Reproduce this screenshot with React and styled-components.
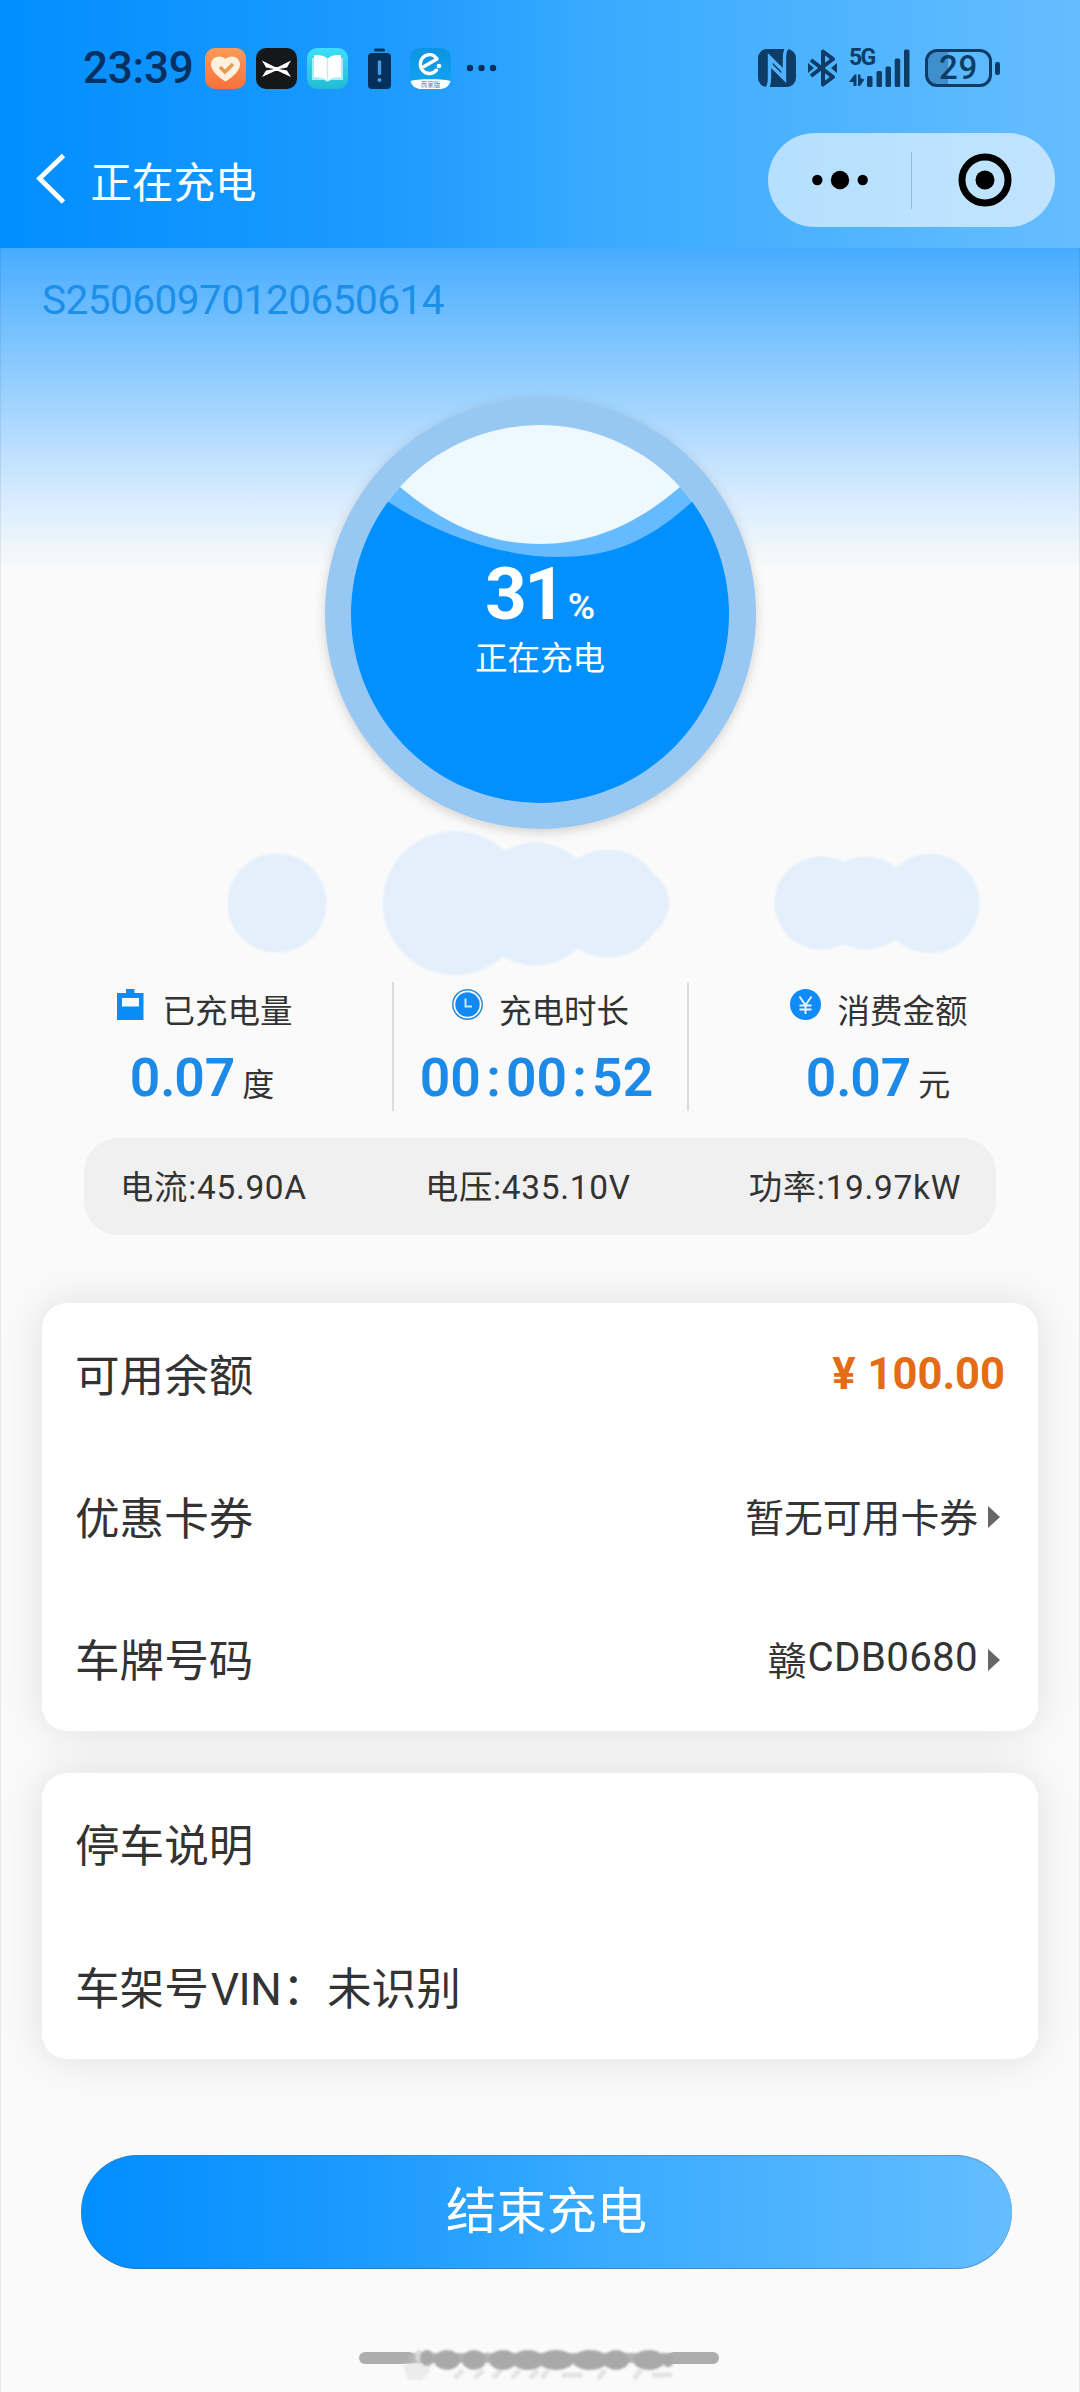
import React from "react";
import styled, { createGlobalStyle } from "styled-components";

const GlobalStyle = createGlobalStyle`
  *, *::before, *::after { box-sizing: border-box; }
  html, body { margin: 0; padding: 0; background: #fafafa; }
  body {
    font-family: Roboto, "Noto Sans CJK SC", sans-serif;
    color: #333;
    -webkit-font-smoothing: antialiased;
  }
`;

const Screen = styled.div`
  width: 1080px;
  height: 2392px;
  display: flex;
  flex-direction: column;
  overflow: hidden;
  background: #fafafa;
`;

/* ---------- header ---------- */

const Header = styled.header`
  flex: none;
  height: 248px;
  background: linear-gradient(90deg, #028eff 0%, #1c9aff 35%, #38aaff 55%, #66bdff 100%);
`;

const StatusBar = styled.div`
  height: 112px;
  padding: 24px 80px 0 83px;
  display: flex;
  align-items: center;
  justify-content: space-between;
  color: #06305c;
`;

const StatusGroup = styled.div`
  display: flex;
  align-items: center;
`;

const Clock = styled.span`
  width: 122px;
  font-size: 44px;
  font-weight: 500;
  line-height: 44px;
  letter-spacing: -0.2px;
  color: #06305f;
`;

const AppIcons = styled.div`
  display: flex;
  align-items: center;
  gap: 10px;
`;

const BatteryAlert = styled.svg`
  margin: 0 9px 0 10px;
`;

const MoreDots = styled.svg`
  margin-left: 5px;
`;

const SignalIcons = styled.div`
  display: flex;
  align-items: center;
  color: #0d3d66;
`;

const Gap = styled.span`
  width: ${(p) => p.$w}px;
`;

const Signal = styled.div`
  width: 61px;
  height: 38px;
  display: flex;
  position: relative;
`;

const NetworkType = styled.span`
  position: absolute;
  left: 0;
  top: -1px;
  font-size: 23px;
  line-height: 20px;
  font-weight: 700;
  letter-spacing: -1.6px;
`;

const BatteryBody = styled.div`
  width: 67px;
  height: 38px;
  display: flex;
  align-items: center;
  justify-content: center;
  border: 3.5px solid #0d3d66;
  border-radius: 12px;
  background: linear-gradient(90deg, #3f8fcc 0 32%, transparent 32%);
  font-size: 33px;
  font-weight: 500;
  line-height: 32px;
  letter-spacing: 0.8px;
`;

const BatteryNub = styled.span`
  width: 5px;
  height: 13px;
  margin-left: 3px;
  border-radius: 2px;
  background: #0d3d66;
`;

const NavBar = styled.div`
  height: 136px;
  padding: 0 25px 0 36px;
  display: flex;
  align-items: center;
`;

const Title = styled.h1`
  margin: 7px auto 0 23.5px;
  font-size: 41.5px;
  line-height: 48px;
  font-weight: 400;
  color: #fff;
`;

const Capsule = styled.div`
  width: 287px;
  height: 94px;
  display: flex;
  align-items: center;
  border-radius: 47px;
  background: rgba(255, 255, 255, 0.6);
`;

const CapsuleButton = styled.span`
  flex: 1;
  display: flex;
  justify-content: center;
`;

const CapsuleRule = styled.span`
  width: 1px;
  height: 57px;
  background: #94bbdb;
`;

/* ---------- body ---------- */

const Body = styled.main`
  flex: 1;
  padding-top: 32px;
  display: flex;
  flex-direction: column;
  background: linear-gradient(180deg, #47acff 0, #8dcbff 122px, #d6ebfe 248px, #fafafa 322px);
  box-shadow: inset 1px 0 rgba(0, 0, 0, 0.07), inset -1px 0 rgba(0, 0, 0, 0.07);
`;

const Serial = styled.div`
  padding-left: 42px;
  font-size: 40.5px;
  line-height: 40px;
  letter-spacing: -0.5px;
  color: #1c8fe9;
`;

const Gauge = styled.div`
  position: relative;
  flex: none;
  width: 431px;
  height: 431px;
  margin: 78px auto 0;
  padding: 26.5px;
  border-radius: 50%;
  background: #97c8f3;
  box-shadow: 0 3px 11px rgba(90, 80, 70, 0.24);
`;

const GaugeReadout = styled.div`
  position: absolute;
  inset: 0;
  padding-top: 160px;
  display: flex;
  flex-direction: column;
  align-items: center;
  color: #fff;
`;

const Percent = styled.div`
  height: 72px;
  display: flex;
  align-items: baseline;
  font-size: 73px;
  font-weight: 700;
  line-height: 72px;
  letter-spacing: -2.5px;
`;

const PercentSign = styled.span`
  margin-left: 4px;
  font-size: 37px;
  font-weight: 600;
  letter-spacing: 0;
`;

const GaugeLabel = styled.div`
  margin-top: 9px;
  font-size: 32.5px;
  line-height: 40px;
`;

const Blobs = styled.svg`
  display: block;
  flex: none;
  margin-bottom: 3px;
`;

const Stats = styled.section`
  flex: none;
  height: 129px;
  padding: 0 11px 0 16px;
  display: grid;
  grid-template-columns: 376px 297px 1fr;
`;

const Stat = styled.div`
  padding-top: 10px;
  display: flex;
  flex-direction: column;
  align-items: center;
  border-left: ${(p) => (p.$ruled ? "2px solid #dcdcdc" : "none")};
  border-right: ${(p) => (p.$ruled ? "2px solid #dcdcdc" : "none")};
`;

const StatLabel = styled.div`
  display: flex;
  align-items: center;
  gap: 16px;
  font-size: 32.5px;
  line-height: 40px;
`;

const StatIcon = styled.svg`
  margin-top: -16px;
`;

const StatValue = styled.div`
  height: 60px;
  margin: 15.5px ${(p) => p.$inset || 0}px 0 0;
  display: flex;
  align-items: baseline;
  font-size: 53.5px;
  font-weight: 600;
  line-height: 60px;
  color: #1d8ae8;
`;

const Sep = styled.span`
  width: ${(p) => p.$w}px;
  text-align: center;
`;

const Unit = styled.span`
  margin-left: 7px;
  font-size: 32px;
  font-weight: 400;
  color: #333;
`;

const Readings = styled.section`
  flex: none;
  height: 97px;
  margin: 27px 84px 0;
  padding: 0 35px 4px 36px;
  display: flex;
  align-items: center;
  justify-content: space-between;
  border-radius: 34px;
  background: #f0f0f0;
  font-size: 33.4px;
  letter-spacing: 0.7px;
`;

const Card = styled.section`
  flex: none;
  margin: ${(p) => p.$top}px 42px 0;
  padding: 0 33px 0 33px;
  border-radius: 25px;
  background: #fff;
  box-shadow: 0 0 44px rgba(0, 0, 0, 0.115);
`;

const Row = styled.div`
  height: 142.8px;
  padding-bottom: 4px;
  display: flex;
  align-items: center;
  justify-content: space-between;
  font-size: 44.6px;
  font-weight: 400;
`;

const Vin = styled.span`
  margin: 0 1px 0 2px;
  letter-spacing: -0.6px;
`;

const Amount = styled.span`
  margin-top: 4px;
  display: flex;
  gap: 10px;
  font-size: 43.5px;
  font-weight: 700;
  color: #e46c17;
`;

const Yen = styled.span`
  margin-right: 2px;
`;

const Choice = styled.span`
  display: flex;
  align-items: center;
  margin-right: 5px;
  font-size: 38.8px;
`;

const Plate = styled.span`
  margin-left: 1px;
  font-size: 40.3px;
  letter-spacing: 0.3px;
`;

const Caret = styled.span`
  margin: 4px 0 0 10px;
  border-left: 12px solid #666;
  border-top: 11px solid transparent;
  border-bottom: 11px solid transparent;
`;

const StopButton = styled.button`
  flex: none;
  height: 114px;
  margin: 96px 68px 0 81px;
  padding: 0;
  border: 0;
  border-radius: 57px;
  background: linear-gradient(90deg, #028eff 0%, #1c9aff 30%, #38aaff 55%, #64bdff 100%);
  box-shadow: inset 0 1px rgba(80, 110, 140, 0.45), inset 0 -1px rgba(50, 90, 130, 0.45);
  font-family: inherit;
  font-size: 50.3px;
  line-height: 60px;
  color: #fff;
`;

const HomeBar = styled.svg`
  display: block;
  flex: none;
  margin-top: 77px;
`;

function HeartApp() {
  return (
    <svg width="41" height="41" viewBox="0 0 41 41">
      <defs>
        <linearGradient id="orange" x1="0" y1="0" x2="0" y2="1">
          <stop offset="0" stopColor="#fb9a56" />
          <stop offset="1" stopColor="#f9703c" />
        </linearGradient>
      </defs>
      <rect width="41" height="41" rx="10" fill="url(#orange)" />
      <path d="M20.5 33.5 C17 31.5 6 24 6 16.5 C6 8.5 16 6 20.5 11 C25 6 35 8.5 35 16.5 C35 24 24 31.5 20.5 33.5Z" fill="#fff1e0" />
      <path d="M15 19 l5 5 l8 -8" fill="none" stroke="#eb9b4e" strokeWidth="3.4" />
    </svg>
  );
}

function WingsApp() {
  return (
    <svg width="41" height="41" viewBox="0 0 41 41">
      <rect width="41" height="41" rx="10" fill="#151719" />
      <path d="M6 12.5 L19 19 L22 19 L35 12.5 L31 19.5 L23 21 L31 22.5 L35 29 L22 23 L19 23 L6 29 L10 22.5 L18 21 L10 19.5Z" fill="#fff" />
    </svg>
  );
}

function BookApp() {
  return (
    <svg width="41" height="41" viewBox="0 0 41 41">
      <defs>
        <linearGradient id="aqua" x1="0" y1="0" x2="0" y2="1">
          <stop offset="0" stopColor="#3edffb" />
          <stop offset="1" stopColor="#22bcd3" />
        </linearGradient>
      </defs>
      <rect width="41" height="41" rx="10" fill="url(#aqua)" />
      <path d="M5 10 h31 v22 h-12 l-3.5 2 l-3.5 -2 H5Z" fill="#a4effa" />
      <path d="M20.5 11 C17 7 11 6.5 7 7.5 V29.5 C12 29 17 29.5 20.5 33 C24 29.5 29 29 34 29.5 V7.5 C30 6.5 24 7 20.5 11Z" fill="#fff" />
      <path d="M20.5 11 V33" stroke="#c9e9ef" strokeWidth="1.5" />
    </svg>
  );
}

function MerchantApp() {
  return (
    <svg width="41" height="41" viewBox="0 0 41 41">
      <defs>
        <linearGradient id="sky" x1="0" y1="0" x2="0" y2="1">
          <stop offset="0" stopColor="#0b94e2" />
          <stop offset="1" stopColor="#12a6f2" />
        </linearGradient>
      </defs>
      <rect width="41" height="41" rx="10" fill="url(#sky)" />
      <path d="M14 18.5 L27 11 C23 4.5 14 5.5 11 12.5 C8.5 20 14 26 20 25.5 C23 25.3 25 24 26.5 22" fill="none" stroke="#fff" strokeWidth="3.4" strokeLinecap="round" strokeLinejoin="round" />
      <circle cx="29" cy="18" r="2.3" fill="#fff" />
      <path d="M.5 33 C5 30.5 36 30.5 40.5 33 C39 39 34 41 30 41 H11 C7 41 2 39 .5 33Z" fill="#fff" />
      <text x="20.5" y="38.6" textAnchor="middle" fontSize="6.5" fill="#3182a8" fontFamily="'Noto Sans CJK SC', sans-serif">商家版</text>
    </svg>
  );
}

function StatusLine() {
  return (
    <StatusBar>
      <StatusGroup>
        <Clock>23:39</Clock>
        <AppIcons>
          <HeartApp />
          <WingsApp />
          <BookApp />
          <BatteryAlert width="23" height="41" viewBox="0 0 23 41">
            <rect x="6" y="0.5" width="11" height="3" rx="1.5" fill="#06305c" />
            <rect x="0" y="5" width="23" height="36" rx="4" fill="#06305c" />
            <rect x="9.8" y="12.5" width="3.4" height="14.5" rx="1.2" fill="#419ce6" />
            <circle cx="11.5" cy="32" r="2" fill="#419ce6" />
          </BatteryAlert>
          <MerchantApp />
          <MoreDots width="31" height="8" viewBox="0 0 31 8">
            <circle cx="4" cy="4" r="3.2" fill="#06305c" />
            <circle cx="15.5" cy="4" r="3.2" fill="#06305c" />
            <circle cx="27" cy="4" r="3.2" fill="#06305c" />
          </MoreDots>
        </AppIcons>
      </StatusGroup>
      <SignalIcons>
        <svg width="38" height="38" viewBox="0 0 38 38">
          <rect width="38" height="38" rx="9" fill="#0d3d66" />
          <path d="M9 39 C11.5 36 11.5 33 11.5 29 V8 L25 21.5 V26 M29 -1 C26.5 2 26.5 5 26.5 9 V30 L13 16.5 V12" fill="none" stroke="#52b2fd" strokeWidth="3.4" />
        </svg>
        <Gap $w={12} />
        <svg width="29" height="38" viewBox="0 0 29 38">
          <path d="M3 11 L25 28 L15 35.5 V2.5 L25 10 L3 27" fill="none" stroke="#0d3d66" strokeWidth="4" strokeLinejoin="round" />
          <path d="M0 14 L6 19 L0 24Z M29 14 L23 19 L29 24Z" fill="#0d3d66" />
        </svg>
        <Gap $w={12} />
        <Signal>
          <NetworkType>5G</NetworkType>
          <svg width="61" height="38" viewBox="0 0 61 38">
            <path d="M0 33 L5.5 25.5 H7.5 V37 H4.5 V33Z M9 25.5 H11.5 V29 L15.5 30.5 L11 37 H9Z" fill="#0d3d66" />
            <rect x="18" y="27" width="5.5" height="11" rx="1.5" fill="#0d3d66" />
            <rect x="27.5" y="22" width="5.5" height="16" rx="1.5" fill="#0d3d66" />
            <rect x="36.5" y="17.5" width="5.5" height="20.5" rx="1.5" fill="#0d3d66" />
            <rect x="45.7" y="9.5" width="5.5" height="28.5" rx="1.5" fill="#0d3d66" />
            <rect x="55" y="0.5" width="5.5" height="37.5" rx="1.5" fill="#0d3d66" />
          </svg>
        </Signal>
        <Gap $w={15} />
        <BatteryBody>29</BatteryBody>
        <BatteryNub />
      </SignalIcons>
    </StatusBar>
  );
}

function WaterLevel() {
  return (
    <svg width="378" height="378" viewBox="0 0 378 378">
      <defs>
        <clipPath id="disc">
          <circle cx="189" cy="189" r="189" />
        </clipPath>
      </defs>
      <g clipPath="url(#disc)">
        <rect width="378" height="378" fill="#edf8ff" />
        <path d="M0 15 L49 62 C95 101 140 119 189 119 S284 101 329 62 L378 15 V378 H0Z" fill="#66bbff" />
        <path d="M0 50 L36 76 C85 109 150 132 207 132 S300 114 342 76 L378 44 V378 H0Z" fill="#0290ff" />
      </g>
    </svg>
  );
}

const BatteryGlyph = () => (
  <StatIcon width="31" height="33" viewBox="0 0 31 33">
    <path d="M2 5 H11 V1 H19.5 V5 H28.5 V32 H2Z" fill="#0a8cf8" />
    <rect x="7" y="10" width="17" height="8.5" fill="#f4faff" />
  </StatIcon>
);

const ClockGlyph = () => (
  <StatIcon width="31" height="31" viewBox="0 0 31 31">
    <circle cx="15.5" cy="15.5" r="14.7" fill="#fff" stroke="#2d8bd0" strokeWidth="1.5" />
    <circle cx="15.5" cy="15.5" r="12.2" fill="#1289f2" />
    <path d="M13.5 9.5 V17.5 H20" fill="none" stroke="#c9e8ff" strokeWidth="2" />
  </StatIcon>
);

const YuanGlyph = () => (
  <StatIcon width="31" height="31" viewBox="0 0 31 31">
    <circle cx="15.5" cy="15.5" r="15.5" fill="#0f8bfa" />
    <path d="M9.5 7.5 L15.5 16 L21.5 7.5 M15.5 16 V25 M9.5 16.5 H21.5 M9.5 20.5 H21.5" fill="none" stroke="#e9f6ff" strokeWidth="1.9" />
  </StatIcon>
);

export default function App() {
  return (
    <>
      <GlobalStyle />
      <Screen>
        <Header>
          <StatusLine />
          <NavBar>
            <svg width="31" height="52" viewBox="0 0 31 52">
              <path d="M27.5 1.5 L3.5 24.5 L27.5 48" fill="none" stroke="#fff" strokeWidth="4.8" />
            </svg>
            <Title>正在充电</Title>
            <Capsule>
              <CapsuleButton>
                <svg width="56" height="20" viewBox="0 0 56 20">
                  <circle cx="5.3" cy="10" r="5.2" />
                  <circle cx="28" cy="10" r="9.2" />
                  <circle cx="50.7" cy="10" r="5.2" />
                </svg>
              </CapsuleButton>
              <CapsuleRule />
              <CapsuleButton>
                <svg width="56" height="54" viewBox="-2 0 56 54">
                  <circle cx="27" cy="27" r="23" fill="none" stroke="#000" strokeWidth="7" />
                  <circle cx="27" cy="27" r="9.5" />
                </svg>
              </CapsuleButton>
            </Capsule>
          </NavBar>
        </Header>

        <Body>
          <Serial>S25060970120650614</Serial>

          <Gauge>
            <WaterLevel />
            <GaugeReadout>
              <Percent>
                31<PercentSign>%</PercentSign>
              </Percent>
              <GaugeLabel>正在充电</GaugeLabel>
            </GaugeReadout>
          </Gauge>

          <Blobs width="1080" height="150" viewBox="0 828.5 1080 150">
            <defs>
              <filter id="soft">
                <feGaussianBlur stdDeviation="1.2" />
              </filter>
            </defs>
            <g fill="#e3effb" filter="url(#soft)">
              <circle cx="277" cy="902.5" r="49.5" />
              <circle cx="455" cy="902.5" r="72" />
              <circle cx="535" cy="903.5" r="61.5" />
              <circle cx="608" cy="903" r="54" />
              <circle cx="635" cy="902.5" r="34" />
              <circle cx="821" cy="902.5" r="46.5" />
              <circle cx="866" cy="902.5" r="46.5" />
              <circle cx="930" cy="903" r="49.5" />
            </g>
          </Blobs>

          <Stats>
            <Stat>
              <StatLabel>
                <BatteryGlyph />
                已充电量
              </StatLabel>
              <StatValue $inset={4}>
                0<Sep $w={14}>.</Sep>07<Unit>度</Unit>
              </StatValue>
            </Stat>
            <Stat $ruled>
              <StatLabel>
                <ClockGlyph />
                充电时长
              </StatLabel>
              <StatValue $inset={8}>
                00<Sep $w={25}>:</Sep>00<Sep $w={25}>:</Sep>52
              </StatValue>
            </Stat>
            <Stat>
              <StatLabel>
                <YuanGlyph />
                消费金额
              </StatLabel>
              <StatValue $inset={2}>
                0<Sep $w={14}>.</Sep>07<Unit>元</Unit>
              </StatValue>
            </Stat>
          </Stats>

          <Readings>
            <span>电流:45.90A</span>
            <span>电压:435.10V</span>
            <span>功率:19.97kW</span>
          </Readings>

          <Card $top={68}>
            <Row>
              <span>可用余额</span>
              <Amount>
                <Yen>¥</Yen>
                <span>100.00</span>
              </Amount>
            </Row>
            <Row>
              <span>优惠卡券</span>
              <Choice>
                暂无可用卡券
                <Caret />
              </Choice>
            </Row>
            <Row>
              <span>车牌号码</span>
              <Choice>
                赣<Plate>CDB0680</Plate>
                <Caret />
              </Choice>
            </Row>
          </Card>

          <Card $top={42}>
            <Row>停车说明</Row>
            <Row>
              <span>
                车架号<Vin>VIN</Vin>：未识别
              </span>
            </Row>
          </Card>

          <StopButton>结束充电</StopButton>

          <HomeBar width="1080" height="45" viewBox="0 2347 1080 45">
            <defs>
              <filter id="smudge">
                <feGaussianBlur stdDeviation="1.3" />
              </filter>
            </defs>
            <rect x="359" y="2353" width="56" height="12" rx="6" fill="#adadad" />
            <rect x="668" y="2353" width="51" height="12" rx="6" fill="#adadad" />
            <g filter="url(#smudge)">
              <path d="M403 2365 H430 V2373 L422 2381 H408Z" fill="#ececec" />
              <path d="M455 2379 l8 -8 M475 2379 l8 -8 M493 2379 l8 -8 M512 2379 l8 -8 M530 2379 l8 -8 M542 2379 l6 -8 M562 2376 h20 M598 2380 l7 -9 M634 2380 l7 -9 M652 2376 h20" stroke="#e4e4e4" strokeWidth="5" />
              <path d="M408 2359 H672" stroke="#b4b4b4" strokeWidth="10" />
              <ellipse cx="419" cy="2357" rx="4" ry="6" fill="#d8d8d8" />
              <g fill="#a9a9a9">
                <ellipse cx="427" cy="2359" rx="7" ry="8" />
                <ellipse cx="447" cy="2361" rx="13" ry="10" />
                <ellipse cx="474" cy="2361" rx="12" ry="10" />
                <ellipse cx="503" cy="2361" rx="14" ry="10" />
                <ellipse cx="528" cy="2361" rx="16" ry="10" />
                <ellipse cx="556" cy="2361" rx="18" ry="10" />
                <ellipse cx="590" cy="2361" rx="18" ry="10" />
                <ellipse cx="616" cy="2361" rx="13" ry="10" />
                <ellipse cx="649" cy="2361" rx="16" ry="10" />
                <ellipse cx="668" cy="2361" rx="6" ry="7" />
              </g>
            </g>
          </HomeBar>
        </Body>
      </Screen>
    </>
  );
}
